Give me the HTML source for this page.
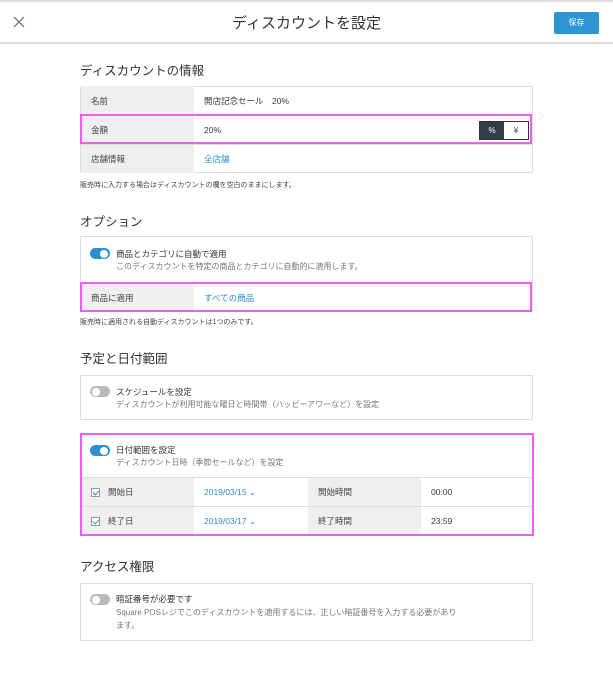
<!DOCTYPE html><html><head><meta charset="utf-8"><style>
*{margin:0;padding:0;box-sizing:border-box}
body{width:613px;height:700px;background:#fff;font-family:"Liberation Sans","Noto Sans CJK JP",sans-serif;color:#3a3a3a;position:relative;overflow:hidden}
.a{position:absolute}
.hdr{left:0;top:0;width:613px;height:44px;border-top:2px solid #ddd;border-bottom:2px solid #dcdcdc;background:#fff}
.h2{font-size:12.5px;color:#333;left:80px}
.box{left:80px;width:453px;border:1px solid #ddd;background:#fff}
.row{position:absolute;left:0;width:100%;border-top:1px solid #ddd;font-size:8.5px;display:flex;align-items:center}
.lab{width:113px;height:100%;background:#eeeff1;display:flex;align-items:center;padding-left:10px;color:#444}
.val{padding-left:10px;display:flex;align-items:center;height:100%}
.blue{color:#2a8fcf}
.note{left:80px;font-size:7px;color:#444}
.tog{position:absolute;width:20px;height:11px;border-radius:6px}
.tog.on{background:#2b8fd0}.tog.off{background:#bbb}
.tog:after{content:"";position:absolute;top:1.5px;width:8px;height:8px;border-radius:50%;background:#fff}
.tog.on:after{right:2px}.tog.off:after{left:2px}
.t1{font-size:8.5px;color:#333}.t2{font-size:8px;color:#777}
.pink{border:2px solid #f35cf0}
.cb{width:9px;height:9px;border:1px solid #999;margin-right:8px;position:relative;background:#fff}
.cb:after{content:"";position:absolute;left:2px;top:0;width:3px;height:5px;border:solid #2a8fcf;border-width:0 1.5px 1.5px 0;transform:rotate(45deg)}
</style></head><body>
<div class="a hdr"></div>
<svg class="a" style="left:13px;top:16px" width="12" height="12"><path d="M1 1L11 11M11 1L1 11" stroke="#666" stroke-width="1.2"/></svg>
<div class="a" style="left:0;width:613px;top:12px;text-align:center;font-size:15px;color:#333">ディスカウントを設定</div>
<div class="a" style="left:554px;top:12px;width:45px;height:22px;background:#2d96d2;border-radius:2px;color:#fff;font-size:8px;text-align:center;line-height:22px">保存</div>

<div class="a h2" style="top:60px">ディスカウントの情報</div>
<div class="a box" style="top:86px;height:87px">
<div class="row" style="top:-1px;height:29px;border-top:0"><div class="lab">名前</div><div class="val">開店記念セール　20%</div></div>
<div class="row" style="top:28px;height:29px"><div class="lab">金額</div><div class="val">20%</div>
<div class="a" style="left:398px;top:5px;width:50px;height:19px;border:1px solid #333;display:flex;font-size:8px"><div style="width:24px;background:#333d47;color:#fff;text-align:center;line-height:17px">%</div><div style="flex:1;text-align:center;line-height:17px">¥</div></div></div>
<div class="row" style="top:57px;height:29px"><div class="lab">店舗情報</div><div class="val blue">全店舗</div></div>
</div>
<div class="a pink" style="left:80px;top:114px;width:452px;height:30px"></div>
<div class="a note" style="top:180px">販売時に入力する場合はディスカウントの欄を空白のままにします。</div>

<div class="a h2" style="top:211px">オプション</div>
<div class="a box" style="top:236px;height:76px">
<div class="tog on" style="left:9px;top:11px"></div>
<div class="a t1" style="left:35px;top:11px">商品とカテゴリに自動で適用</div>
<div class="a t2" style="left:35px;top:24px">このディスカウントを特定の商品とカテゴリに自動的に適用します。</div>
<div class="row" style="top:46px;height:29px"><div class="lab">商品に適用</div><div class="val blue">すべての商品</div></div>
</div>
<div class="a pink" style="left:80px;top:282px;width:452px;height:30px"></div>
<div class="a note" style="top:317px">販売時に適用される自動ディスカウントは1つのみです。</div>

<div class="a h2" style="top:348px">予定と日付範囲</div>
<div class="a box" style="top:375px;height:45px">
<div class="tog off" style="left:9px;top:10px"></div>
<div class="a t1" style="left:35px;top:10px">スケジュールを設定</div>
<div class="a t2" style="left:35px;top:23px">ディスカウントが利用可能な曜日と時間帯（ハッピーアワーなど）を設定</div>
</div>

<div class="a box" style="top:434px;height:102px">
<div class="tog on" style="left:9px;top:10px"></div>
<div class="a t1" style="left:35px;top:9px">日付範囲を設定</div>
<div class="a t2" style="left:35px;top:22px">ディスカウント日時（季節セールなど）を設定</div>
<div class="row" style="top:42px;height:29px"><div class="lab"><div class="cb"></div>開始日</div><div class="val blue" style="width:114px">2019/03/15 ⌄</div><div class="lab" style="width:113px">開始時間</div><div class="val">00:00</div></div>
<div class="row" style="top:71px;height:29px"><div class="lab"><div class="cb"></div>終了日</div><div class="val blue" style="width:114px">2019/03/17 ⌄</div><div class="lab" style="width:113px">終了時間</div><div class="val">23:59</div></div>
</div>
<div class="a pink" style="left:80px;top:433px;width:454px;height:103px"></div>

<div class="a h2" style="top:556px">アクセス権限</div>
<div class="a box" style="top:583px;height:58px">
<div class="tog off" style="left:9px;top:10px"></div>
<div class="a t1" style="left:35px;top:9px">暗証番号が必要です</div>
<div class="a t2" style="left:35px;top:22px;width:345px;line-height:13px">Square POSレジでこのディスカウントを適用するには、正しい暗証番号を入力する必要があります。</div>
</div>
</body></html>
